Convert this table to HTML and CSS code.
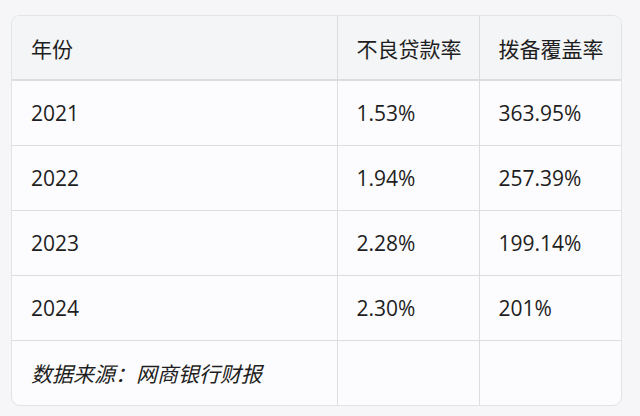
FILE: index.html
```html
<!DOCTYPE html>
<html lang="zh-CN">
<head>
<meta charset="utf-8">
<link rel="stylesheet" href="styles.css">
</head>
<body>
<div class="card">
  <table class="data">
    <colgroup>
      <col class="c1"><col class="c2"><col class="c3">
    </colgroup>
    <thead>
      <tr><th>年份</th><th>不良贷款率</th><th>拨备覆盖率</th></tr>
    </thead>
    <tbody>
      <tr><td>2021</td><td>1.53%</td><td>363.95%</td></tr>
      <tr><td>2022</td><td>1.94%</td><td>257.39%</td></tr>
      <tr><td>2023</td><td>2.28%</td><td>199.14%</td></tr>
      <tr><td>2024</td><td>2.30%</td><td>201%</td></tr>
      <tr><td class="note">数据来源：网商银行财报</td><td></td><td></td></tr>
    </tbody>
  </table>
</div>
</body>
</html>
```
FILE: styles.css
```css
html, body {
  margin: 0;
  padding: 0;
  background: #f6f6f8;
}
body {
  padding: 15px 18px 0 11px;
  font-family: "Open Sans", "Noto Sans CJK SC", sans-serif;
  color: #1e1e22;
}
.card {
  width: 611px;
  border: 1px solid #e2e3e7;
  border-radius: 9px;
  overflow: hidden;
  background: #fcfcfe;
  box-sizing: border-box;
}
.data {
  width: 100%;
  border-collapse: collapse;
  table-layout: fixed;
}
.c1 { width: 325px; }
.c2 { width: 142px; }
.c3 { width: auto; }
.data th,
.data td {
  height: 65px;
  padding: 0 0 0 19px;
  text-align: left;
  font-size: 21px;
  font-weight: 400;
  vertical-align: middle;
  box-sizing: border-box;
  border-left: 1px solid #dcdde1;
  border-top: 1px solid #dcdde1;
}
.data th:first-child,
.data td:first-child {
  border-left: none;
}
.data thead th {
  height: 64px;
  border-top: none;
  background: #f4f5f7;
  font-family: "Noto Sans CJK SC", sans-serif;
  border-bottom: 2px solid #dcdde1;
}
.data tbody tr:first-child td {
  border-top: none;
}
.data td.note {
  font-family: "Noto Sans CJK SC", sans-serif;
  font-style: italic;
  font-size: 21px;
}
```
